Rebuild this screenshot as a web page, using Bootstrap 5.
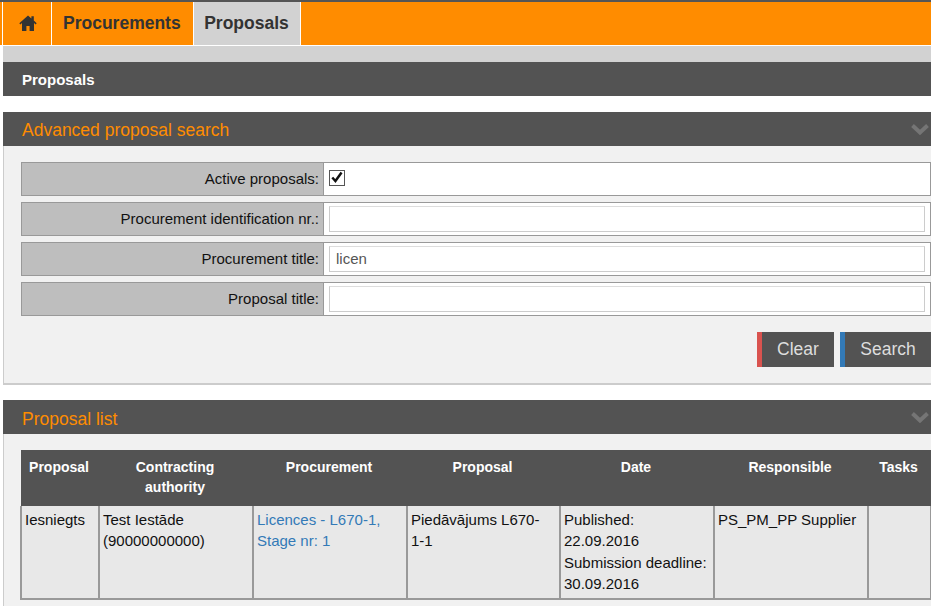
<!DOCTYPE html>
<html lang="en">
<head>
<meta charset="utf-8">
<title>Proposals</title>
<link href="https://cdn.jsdelivr.net/npm/bootstrap@5.3.0/dist/css/bootstrap.min.css" rel="stylesheet">
<style>
html,body{height:606px;overflow:hidden}
body{font-family:"Liberation Sans",Arial,sans-serif;font-size:15px;color:#111;background:#fff;line-height:20px}
.topnav{background:#ff8c00;border-top:2px solid #555;height:46px;border-bottom:1px solid #fff;padding-left:2px}
.topnav a{display:flex;align-items:center;height:43px;border-left:1px solid #fff;color:#333;font-weight:700;font-size:17.5px;text-decoration:none;padding:0 12px 2px 11px}
.topnav a.home{width:49px;justify-content:center;padding:0 0 1px 1px}
.topnav a.here{background:#d2d2d2;border-right:1px solid #fff;padding:0 11.5px 2px 10.5px}
.page-wrap{padding-left:3px}
.subband{height:16px;background:#d2d2d2}
.titlebar{height:34px;background:#535353;color:#fff;font-weight:700;padding:2px 0 0 19px;margin-bottom:16px}
.phead{height:34px;background:#535353;color:#ff8c00;font-size:17.5px;padding-left:19px;padding-right:2px}
.phead-a{padding-top:2px}
.phead-b{padding-top:4px}
.phead svg{margin-top:-2px}
.phead-b svg{margin-top:-4px}
.pbody{background:#f1f1f1;border-left:1px solid #ccc;border-bottom:2px solid #ccc}
.pbody-search{height:239px;padding:16px 0 0 17px;margin-bottom:15px}
.pbody-list{padding:16px 0 6px 17px}
.frow{height:34px;margin-bottom:6px;border:1px solid #999;background:#fff}
.flabel{width:302px;background:#bebebe;border-right:1px solid #999;padding-right:4px;text-align:right}
.fval{padding:0 5px}
.fval input[type=text]{width:100%;height:26px;border:1px solid #ccc;border-top-color:#ddd;padding:0 6px 2px;font-size:15px;color:#555;background:#fff;outline:0;font-family:inherit;display:block}
.tick{appearance:none;width:16px;height:16px;border:1px solid #555;border-radius:0;background:#fff url("data:image/svg+xml,%3Csvg xmlns='http://www.w3.org/2000/svg' viewBox='0 0 16 16'%3E%3Cpath d='M2.6 7.4l3.6 4 7-9.6' fill='none' stroke='%23111' stroke-width='2.8'/%3E%3C/svg%3E") center/contain no-repeat;display:block;margin:-3px 0 0}
.btnrow{padding-top:10px}
.act{height:35px;border:0;border-radius:0;background:#535353;color:#ddd;font-size:17.5px;line-height:1;padding:0;border-left:5px solid #d9534f}
.act:hover{background:#535353;color:#ddd}
.act-clear{width:77px;margin-right:6px}
.act-search{width:91px;border-left-color:#337ab7}
.prop-table{width:910px;table-layout:fixed;border-collapse:collapse;margin:0 0 0 -1px}
.prop-table th{background:#535353;color:#fff;font-size:14px;font-weight:700;text-align:center;vertical-align:top;padding:7px 8px 8px 6px;height:56px;line-height:20px}
.prop-table td{background:#e8e8e8;vertical-align:top;padding:3px 7px 4px 3px;border:2px solid #999;border-top:0;line-height:21.3px}
.prop-table a{color:#337ab7;text-decoration:none}
</style>
</head>
<body>
<nav class="topnav d-flex">
  <a class="home" href="#" aria-label="Home"><svg width="18" height="16" viewBox="0 0 18 16"><path fill="#333" d="M9 0.5 0.3 8.2l1.1 1.2L3 8v8h4.4v-5h3.2v5H15V8l1.6 1.4 1.1-1.2L14.8 5.6V1.2h-2.4v2.3z"/></svg></a>
  <a href="#">Procurements</a>
  <a class="here" href="#">Proposals</a>
</nav>
<main class="page-wrap">
  <div class="subband"></div>
  <div class="titlebar d-flex align-items-center">Proposals</div>

  <div class="phead phead-a d-flex align-items-center justify-content-between">
    <span>Advanced proposal search</span>
    <svg width="18" height="12" viewBox="0 0 18 12"><path d="M1.5 2.5 9 9.5l7.5-7" fill="none" stroke="#757575" stroke-width="4"/></svg>
  </div>
  <div class="pbody pbody-search">
    <div class="frow d-flex">
      <label class="flabel d-flex align-items-center justify-content-end">Active proposals:</label>
      <div class="fval d-flex align-items-center flex-grow-1"><input class="tick" type="checkbox" checked aria-label="Active proposals"></div>
    </div>
    <div class="frow d-flex">
      <label class="flabel d-flex align-items-center justify-content-end">Procurement identification nr.:</label>
      <div class="fval d-flex align-items-center flex-grow-1"><input type="text" aria-label="Procurement identification nr."></div>
    </div>
    <div class="frow d-flex">
      <label class="flabel d-flex align-items-center justify-content-end">Procurement title:</label>
      <div class="fval d-flex align-items-center flex-grow-1"><input type="text" value="licen" aria-label="Procurement title"></div>
    </div>
    <div class="frow d-flex">
      <label class="flabel d-flex align-items-center justify-content-end">Proposal title:</label>
      <div class="fval d-flex align-items-center flex-grow-1"><input type="text" aria-label="Proposal title"></div>
    </div>
    <div class="btnrow d-flex justify-content-end">
      <button class="btn act act-clear" type="button">Clear</button>
      <button class="btn act act-search" type="button">Search</button>
    </div>
  </div>

  <div class="phead phead-b d-flex align-items-center justify-content-between">
    <span>Proposal list</span>
    <svg width="18" height="12" viewBox="0 0 18 12"><path d="M1.5 2.5 9 9.5l7.5-7" fill="none" stroke="#757575" stroke-width="4"/></svg>
  </div>
  <div class="pbody pbody-list">
    <table class="prop-table">
      <colgroup><col style="width:78px"><col style="width:154px"><col style="width:154px"><col style="width:153px"><col style="width:154px"><col style="width:154px"><col style="width:63px"></colgroup>
      <thead><tr><th>Proposal</th><th>Contracting authority</th><th>Procurement</th><th>Proposal</th><th>Date</th><th>Responsible</th><th>Tasks</th></tr></thead>
      <tbody><tr>
        <td>Iesniegts</td>
        <td>Test Iestāde (90000000000)</td>
        <td><a href="#">Licences - L670-1, Stage nr: 1</a></td>
        <td>Piedāvājums L670-1-1</td>
        <td class="text-nowrap">Published:<br>22.09.2016<br>Submission deadline:<br>30.09.2016</td>
        <td class="text-nowrap">PS_PM_PP Supplier</td>
        <td></td>
      </tr></tbody>
    </table>
  </div>
</main>
</body>
</html>
